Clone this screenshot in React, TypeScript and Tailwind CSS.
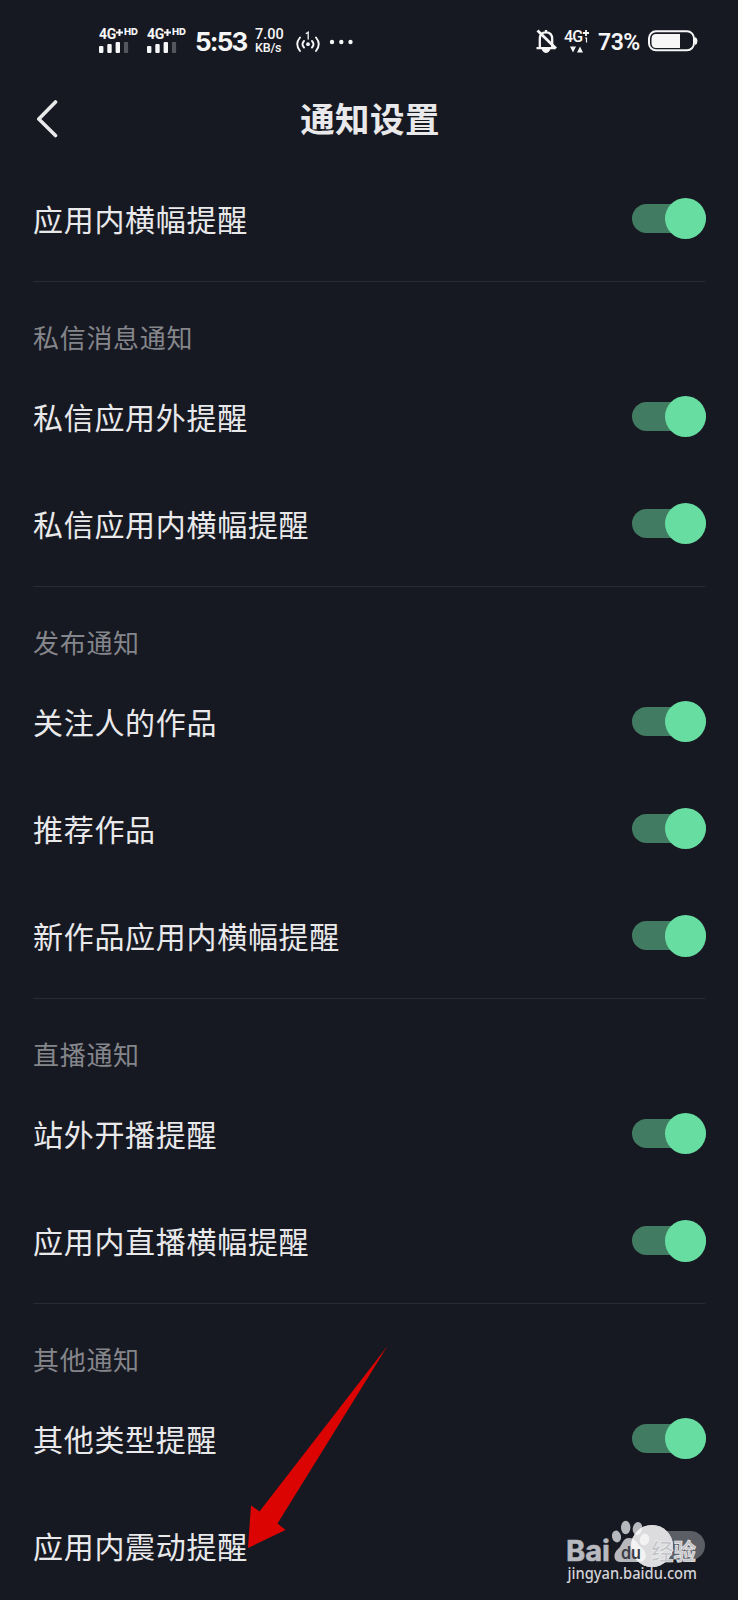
import React from "react";

type RowData = { label: string; on: boolean };
type Section = { title?: string; rows: RowData[] };

const sections: Section[] = [
  { rows: [{ label: "应用内横幅提醒", on: true }] },
  {
    title: "私信消息通知",
    rows: [
      { label: "私信应用外提醒", on: true },
      { label: "私信应用内横幅提醒", on: true },
    ],
  },
  {
    title: "发布通知",
    rows: [
      { label: "关注人的作品", on: true },
      { label: "推荐作品", on: true },
      { label: "新作品应用内横幅提醒", on: true },
    ],
  },
  {
    title: "直播通知",
    rows: [
      { label: "站外开播提醒", on: true },
      { label: "应用内直播横幅提醒", on: true },
    ],
  },
  {
    title: "其他通知",
    rows: [
      { label: "其他类型提醒", on: true },
      { label: "应用内震动提醒", on: false },
    ],
  },
];

function Signal() {
  return (
    <div className="flex h-[25px] w-[48px] flex-col justify-between">
      <div className="flex h-[11px] items-start whitespace-nowrap leading-none">
        <span className="w-[17px] font-[Roboto] text-[14px] font-bold leading-[10px] tracking-[-0.4px]">4G</span>
        <svg width="7" height="8" viewBox="0 0 7 8" stroke="currentColor" strokeWidth="2">
          <path d="M0 3.500H7M3.500 0V7" />
        </svg>
        <span className="ml-px font-[Inter] text-[9.5px] font-extrabold leading-[6px]">HD</span>
      </div>
      <svg width="30" height="12" viewBox="0 0 30 12" fill="currentColor">
        <rect x="0" y="4" width="4.4" height="7" rx="1" />
        <rect x="8.3" y="2" width="4.4" height="9" rx="1" />
        <rect x="16.6" y="0" width="4.4" height="11" rx="1" />
        <rect x="24.9" y="-1" width="4.2" height="12" rx="1" opacity=".28" />
      </svg>
    </div>
  );
}

function StatusBar() {
  return (
    <div className="flex h-[82px] items-center justify-between pl-[99px] pr-[40px] text-[#f6f6f7]">
      <div className="flex h-[26px] items-center">
        <Signal />
        <Signal />
        <span className="w-[60px] whitespace-nowrap pt-[2px] font-[Inter] text-[26px] font-bold leading-[26px] tracking-[-1.8px]">5:53</span>
        <div className="flex w-[41px] flex-col whitespace-nowrap font-[Roboto] font-medium">
          <span className="text-[14.5px] leading-[13px]">7.00</span>
          <span className="text-[12.5px] leading-[13px] tracking-[-0.2px]">KB/s</span>
        </div>
        <svg className="mt-px" width="24" height="22" viewBox="0 0 24 22" fill="none" stroke="currentColor" strokeWidth="1.9" strokeLinecap="round">
          <path d="M4 6.5Q-1.5 13 4 20M20 6.5Q25.5 13 20 20M8 10Q5 13.3 8 16.5M16 10Q19 13.3 16 16.5" />
          <path d="M10.2 2.5L12.2 1.2V8" strokeWidth="1.3" />
          <circle cx="12" cy="13.2" r="1.9" fill="currentColor" stroke="none" />
        </svg>
        <svg className="ml-[9px] mt-[2px]" width="26" height="6" viewBox="0 0 26 6" fill="currentColor">
          <circle cx="3" cy="3" r="2.2" />
          <circle cx="12.3" cy="3" r="2.2" />
          <circle cx="21.5" cy="3" r="2.2" />
        </svg>
      </div>
      <div className="flex h-[26px] items-center">
        <svg width="22" height="26" viewBox="0 0 22 26" fill="none" stroke="currentColor" strokeWidth="2.3">
          <path d="M.5 20.2H19M3.8 19.5V11Q3.8 4.3 10 4.3Q16.2 4.3 16.2 11V19.5M10 4V2" />
          <path d="M6 21Q7 24.5 10 24.5Q13 24.5 14 21Z" fill="currentColor" strokeWidth="1" />
          <path d="M1.5 2.5L20 20.5" strokeWidth="2.8" />
        </svg>
        <div className="ml-[6px] flex h-[24px] w-[34px] flex-col justify-between">
          <div className="flex items-start">
            <span className="w-[18px] whitespace-nowrap font-[Roboto] text-[16px] font-medium leading-[16px] tracking-[-0.8px]">4G</span>
            <svg width="8" height="14" viewBox="0 0 8 14" fill="none" stroke="currentColor">
              <path d="M1 4H7M4 1V7" strokeWidth="1.8" />
              <path d="M3 9H4.5V13.5" strokeWidth="1.2" />
            </svg>
          </div>
          <svg className="ml-[6px]" width="14" height="7" viewBox="0 0 14 7" fill="currentColor">
            <path d="M0 .5H6L3 6.5ZM7 6.5L10 .5L13 6.5Z" />
          </svg>
        </div>
        <span className="w-[50px] whitespace-nowrap pt-[3px] font-[Roboto] text-[23px] font-semibold leading-[26px] tracking-[-0.5px]">73%</span>
        <svg width="50" height="22" viewBox="0 0 50 22" fill="none">
          <rect x="1" y="1.3" width="45" height="19" rx="7" stroke="currentColor" strokeWidth="2" />
          <path d="M8 4H32V18H8Q3.5 18 3.5 13V9Q3.5 4 8 4Z" fill="currentColor" />
          <path d="M47 7Q49.5 8 49.5 11Q49.5 14 47 15Z" fill="currentColor" />
        </svg>
      </div>
    </div>
  );
}

function Toggle({ on }: { on: boolean }) {
  return (
    <div className={`flex h-[42px] w-[74px] items-center ${on ? "" : "mr-px"}`}>
      <div className={`flex h-[29px] w-full items-center rounded-full ${on ? "justify-end bg-[#417b61]" : "justify-start bg-[#5c5e66]"}`}>
        <div className={`shrink-0 rounded-full ${on ? "size-[41.5px] bg-[#67dda1]" : "size-[42px] bg-[#e0e0e1]"}`} />
      </div>
    </div>
  );
}

function PawPrint() {
  return (
    <>
      <ellipse cx="50.5" cy="16.5" rx="4.5" ry="6" transform="rotate(-12 50.5 16.5)" />
      <ellipse cx="59.7" cy="7.5" rx="4.7" ry="6.7" />
      <ellipse cx="71.5" cy="8.5" rx="4.7" ry="6.5" transform="rotate(12 71.5 8.5)" />
      <ellipse cx="78.5" cy="19.5" rx="4.7" ry="6" transform="rotate(12 78.5 19.5)" />
      <path d="M63 18C70 18 71 24 76 28C82 33 81 42 73 42H54C47 42 47 33 52 29C57 25 56 18 63 18Z" />
    </>
  );
}

function Watermark() {
  return (
    <svg className="absolute left-[566px] top-[1520px]" width="140" height="66" viewBox="0 0 140 66">
      <clipPath id="knob">
        <circle cx="86" cy="26" r="21" />
      </clipPath>
      <g fill="#b7b8be">
        <PawPrint />
      </g>
      <circle cx="86" cy="26" r="21" fill="#dcdcde" />
      <g fill="#f3f3f3" clipPath="url(#knob)">
        <PawPrint />
      </g>
      <g fontFamily="Inter, 'Noto Sans CJK SC', sans-serif" fontWeight="700">
        <text x="0" y="41" fontSize="29" fill="#b9bac0" stroke="#b9bac0" strokeWidth=".6" textLength="44" lengthAdjust="spacingAndGlyphs">Bai</text>
        <text x="55" y="39" fontSize="17" fontWeight="600" fill="#3b3c45" textLength="20" lengthAdjust="spacingAndGlyphs">du</text>
        <text x="85" y="39.5" fontSize="23" fill="#c3c4c8" stroke="#f1f1f2" strokeWidth=".6" textLength="45" lengthAdjust="spacingAndGlyphs">经验</text>
      </g>
      <text x="1.5" y="59" fontFamily="'Noto Sans', sans-serif" fontSize="16" fontWeight="500" fill="#d2d2d6" textLength="129.5" lengthAdjust="spacingAndGlyphs">jingyan.baidu.com</text>
    </svg>
  );
}

export default function App() {
  return (
    <div className="relative h-[1600px] w-[738px] overflow-hidden bg-[#171922] font-['Noto_Sans_CJK_SC',sans-serif] text-[#e9e9eb]">
      <StatusBar />
      <header className="grid h-[75px] grid-cols-[1fr_auto_1fr] items-center pl-[37px] pr-[35px]">
        <svg width="24" height="40" viewBox="0 0 24 40" fill="none" stroke="currentColor" strokeWidth="3.6" strokeLinecap="round" strokeLinejoin="round">
          <path d="M18.500 2L1.800 19L18.500 35.500" />
        </svg>
        <h1 className="pb-[5px] text-[34.5px] font-bold leading-[40px] tracking-[0.4px]">通知设置</h1>
      </header>
      <main className="px-[32px] pt-[8px]">
        {sections.map((section, i) => (
          <section key={i} className={i > 0 ? "mt-[8.7px]" : ""}>
            {section.title && (
              <h2 className="mx-px h-[81.7px] border-t border-[#292b34] pt-[37px] text-[26px] leading-[36px] tracking-[0.7px] text-[#85868b]">{section.title}</h2>
            )}
            {section.rows.map((row) => (
              <div key={row.label} className="flex h-[107.3px] items-center justify-between pl-px">
                <span className="pb-[1px] text-[30px] leading-[44px] tracking-[0.7px]">{row.label}</span>
                <Toggle on={row.on} />
              </div>
            ))}
          </section>
        ))}
      </main>
      <svg className="absolute left-[247px] top-[1346px]" width="142" height="204" viewBox="0 0 142 204">
        <path d="M140.5 0L12.5 165.5L4 159.5L1 202L38.5 184L30.5 177.5Z" fill="#dc0402" />
      </svg>
      <Watermark />
    </div>
  );
}
